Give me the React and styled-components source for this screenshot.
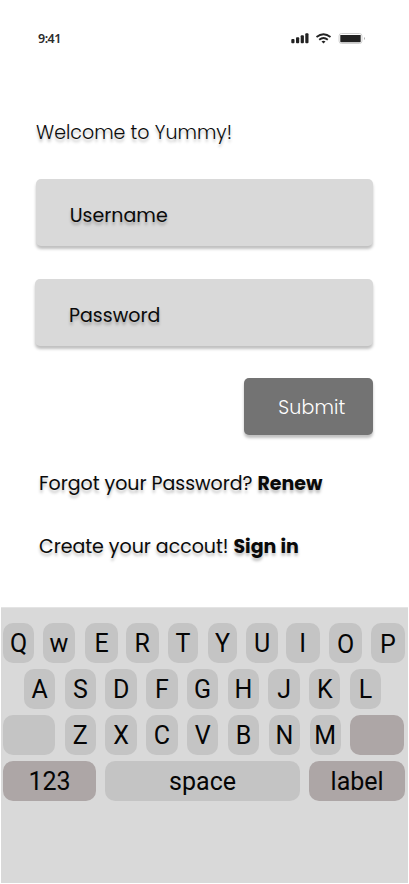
import React from "react";
import styled, { createGlobalStyle } from "styled-components";

const GlobalStyle = createGlobalStyle`
  * { box-sizing: border-box; }
  html, body { margin: 0; padding: 0; background: #fff; }
`;

const Screen = styled.main`
  width: 409px;
  height: 884px;
  overflow: hidden;
  display: flex;
  flex-direction: column;
  background: #fff;
  color: #0a0a0a;
  font-family: Poppins, Inter, sans-serif;
`;

const StatusBar = styled.header`
  flex: none;
  height: 78px;
  padding: 0 43px 0 38px;
  display: flex;
  align-items: center;
  justify-content: space-between;
`;

const Clock = styled.time`
  font: 600 12.5px/16px "Noto Sans", sans-serif;
  letter-spacing: -0.5px;
  color: #2c2c2c;
`;

const StatusIcons = styled.svg`
  display: block;
  width: 76px;
  height: 16px;
`;

const Form = styled.form`
  flex: none;
  height: 529px;
  padding: 40px 36px 0;
  display: flex;
  flex-direction: column;
  align-items: flex-start;
`;

const Line = styled.span`
  display: block;
  white-space: nowrap;
  font-size: 19px;
  line-height: 30px;
  font-weight: ${(p) => p.$weight || 400};
  letter-spacing: ${(p) => p.$spacing || 0}px;
  text-shadow: ${(p) => (p.$flat ? "none" : "0 3px 3px rgba(0, 0, 0, 0.25)")};
`;

const Title = styled(Line).attrs({ as: "h1" })`
  margin: 0 0 31px;
`;

const Field = styled.label`
  display: block;
  width: 337.5px;
  height: 66.5px;
  padding: 22px 34px 0;
  margin: 0 0 ${(p) => p.$gap}px ${(p) => p.$shift || -0.3}px;
  border-radius: 5px;
  background: #d9d9d9;
  box-shadow: 0 3px 3px rgba(0, 0, 0, 0.25);
`;

const Submit = styled.button`
  align-self: flex-end;
  width: 129px;
  height: 57px;
  margin: 0 -0.3px 34px 0;
  padding: 2px 0 0 34px;
  border: 0;
  border-radius: 5px;
  background: #737373;
  color: #fff;
  font-family: inherit;
  text-align: left;
  box-shadow: 0 3px 3px rgba(0, 0, 0, 0.25);
`;

const Prompt = styled.p`
  margin: 0 0 33px 3px;
  display: flex;
  gap: ${(p) => p.$gap}px;
`;

const Keyboard = styled.section`
  flex: none;
  width: 407px;
  height: 276px;
  margin-left: 1px;
  padding: 15px 0 0 2px;
  display: flex;
  flex-direction: column;
  gap: 6px;
  background: #d9d9d9;
  border-top: 1px solid #e4e4e4;
`;

const KeyRow = styled.div`
  display: grid;
  grid-template-columns: ${(p) => p.$columns};
  column-gap: ${(p) => p.$gap || 0}px;
  height: 40px;
  padding-left: ${(p) => p.$indent || 0}px;
`;

const Key = styled.button`
  min-width: 0;
  height: 40px;
  padding: ${(p) => 2 + (p.$drop || 0)}px 0 0 0;
  border: 0;
  border-radius: 10px;
  background: ${(p) => (p.$dark ? "#ada6a6" : "#c4c4c4")};
  color: #050505;
  font: 400 25px/36px Roboto, sans-serif;
  text-align: center;
`;

const LetterKey = styled(Key)`
  margin-right: ${(p) => p.$after}px;
`;

const topKeys = [
  { label: "Q", after: 9 },
  { label: "w", after: 10 },
  { label: "E", after: 8 },
  { label: "R", after: 9.5 },
  { label: "T", after: 10 },
  { label: "Y", after: 9 },
  { label: "U", after: 8 },
  { label: "I", after: 9.5 },
  { label: "O", drop: 2, after: 9 },
  { label: "P", drop: 2, after: 0 },
];

export default function App() {
  return (
    <>
      <GlobalStyle />
      <Screen>
        <StatusBar>
          <Clock>9:41</Clock>
          <StatusIcons viewBox="0 0 76 16" fill="#222">
            <rect x="1.3" y="8" width="3.2" height="4.2" rx="0.9" />
            <rect x="6" y="6.3" width="3.2" height="5.9" rx="0.9" />
            <rect x="10.7" y="4.3" width="3.2" height="7.9" rx="0.9" />
            <rect x="15.3" y="2.3" width="3.2" height="9.9" rx="0.9" />
            <g fill="none" stroke="#222" strokeWidth="1.8">
              <path d="M26.5 6 Q33.5 0.4 40.5 6" />
              <path d="M29.2 8.8 Q33.5 5.2 37.8 8.8" />
            </g>
            <path d="M31.5 10.4 Q33.5 9 35.5 10.4 L33.5 12.4 Z" />
            <rect x="49" y="2.5" width="23" height="10" rx="2.5" fill="#fff" stroke="#d2d2d2" />
            <rect x="50.3" y="4" width="20.4" height="7.2" rx="0.6" />
            <path d="M74 6 Q76 7.5 74 9 Z" fill="#aaa" />
          </StatusIcons>
        </StatusBar>

        <Form onSubmit={(e) => e.preventDefault()}>
          <Title $weight={300}>Welcome to Yummy!</Title>
          <Field $gap={33.5}>
            <Line>Username</Line>
          </Field>
          <Field $gap={32.5} $shift={-1}>
            <Line>Password</Line>
          </Field>
          <Submit type="submit">
            <Line $flat $weight={300} $spacing={0.15}>Submit</Line>
          </Submit>
          <Prompt $gap={5}>
            <Line $spacing={-0.04}>Forgot your Password?</Line>
            <Line $weight={700}>Renew</Line>
          </Prompt>
          <Prompt $gap={5}>
            <Line $spacing={-0.04}>Create your accout!</Line>
            <Line $weight={700}>Sign in</Line>
          </Prompt>
        </Form>

        <Keyboard>
          <KeyRow $columns="40px 42px 41px 42px 40px 38px 40px 43px 42px 34px">
            {topKeys.map((k) => (
              <LetterKey key={k.label} $drop={k.drop} $after={k.after}>
                {k.label}
              </LetterKey>
            ))}
          </KeyRow>
          <KeyRow $columns="repeat(9, 31.3px)" $gap={9.45} $indent={21}>
            {[..."ASDFGHJKL"].map((c) => (
              <Key key={c}>{c}</Key>
            ))}
          </KeyRow>
          <KeyRow $columns="52px repeat(7, 31.3px) 54px" $gap={9.56}>
            <Key aria-label="shift" />
            {[..."ZXCVBNM"].map((c) => (
              <Key key={c}>{c}</Key>
            ))}
            <Key $dark aria-label="delete" />
          </KeyRow>
          <KeyRow $columns="93px 194.5px 96px" $gap={9.3}>
            <Key $dark>123</Key>
            <Key>space</Key>
            <Key $dark>label</Key>
          </KeyRow>
        </Keyboard>
      </Screen>
    </>
  );
}
